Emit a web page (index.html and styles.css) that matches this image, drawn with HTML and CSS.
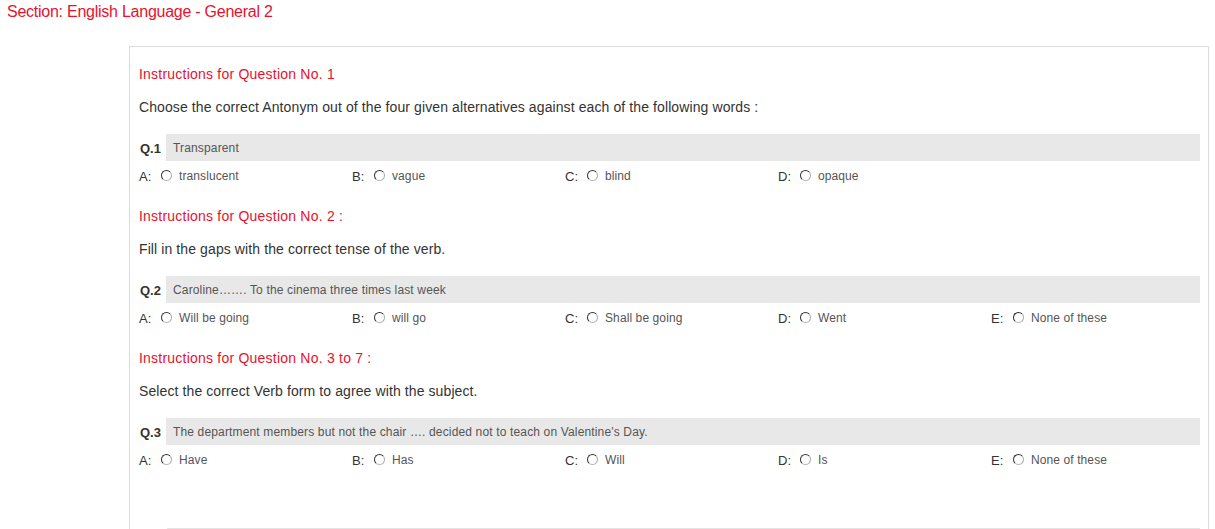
FILE: index.html
```html
<!DOCTYPE html>
<html>
<head>
<meta charset="utf-8">
<link rel="stylesheet" href="styles.css">
</head>
<body>
<div class="section-title">Section: English Language - General 2</div>
<div class="paper">
  <div class="block">
    <div class="instr">Instructions for Question No. 1</div>
    <div class="desc">Choose the correct Antonym out of the four given alternatives against each of the following words :</div>
    <div class="qrow"><span class="qno">Q.1</span><span class="qtext">Transparent</span></div>
    <div class="opts">
      <div class="opt"><span class="lbl">A:</span><span class="radio"></span><span class="otext">translucent</span></div>
      <div class="opt"><span class="lbl">B:</span><span class="radio"></span><span class="otext">vague</span></div>
      <div class="opt"><span class="lbl">C:</span><span class="radio"></span><span class="otext">blind</span></div>
      <div class="opt"><span class="lbl">D:</span><span class="radio"></span><span class="otext">opaque</span></div>
    </div>
  </div>
  <div class="block">
    <div class="instr">Instructions for Question No. 2 :</div>
    <div class="desc">Fill in the gaps with the correct tense of the verb.</div>
    <div class="qrow"><span class="qno">Q.2</span><span class="qtext">Caroline……. To the cinema three times last week</span></div>
    <div class="opts">
      <div class="opt"><span class="lbl">A:</span><span class="radio"></span><span class="otext">Will be going</span></div>
      <div class="opt"><span class="lbl">B:</span><span class="radio"></span><span class="otext">will go</span></div>
      <div class="opt"><span class="lbl">C:</span><span class="radio"></span><span class="otext">Shall be going</span></div>
      <div class="opt"><span class="lbl">D:</span><span class="radio"></span><span class="otext">Went</span></div>
      <div class="opt"><span class="lbl">E:</span><span class="radio"></span><span class="otext">None of these</span></div>
    </div>
  </div>
  <div class="block">
    <div class="instr">Instructions for Question No. 3 to 7 :</div>
    <div class="desc">Select the correct Verb form to agree with the subject.</div>
    <div class="qrow"><span class="qno">Q.3</span><span class="qtext">The department members but not the chair …. decided not to teach on Valentine's Day.</span></div>
    <div class="opts">
      <div class="opt"><span class="lbl">A:</span><span class="radio"></span><span class="otext">Have</span></div>
      <div class="opt"><span class="lbl">B:</span><span class="radio"></span><span class="otext">Has</span></div>
      <div class="opt"><span class="lbl">C:</span><span class="radio"></span><span class="otext">Will</span></div>
      <div class="opt"><span class="lbl">D:</span><span class="radio"></span><span class="otext">Is</span></div>
      <div class="opt"><span class="lbl">E:</span><span class="radio"></span><span class="otext">None of these</span></div>
    </div>
  </div>
  <div class="next"></div>
</div>
</body>
</html>
```
FILE: styles.css
```css
html, body {
  margin: 0;
  padding: 0;
  background: #fff;
  font-family: "Liberation Sans", Arial, sans-serif;
}
.section-title {
  padding: 3px 0 0 7px;
  font-size: 16px;
  line-height: 18px;
  letter-spacing: -0.25px;
  color: #e8112d;
}
.paper {
  margin: 25px 6px 0 129px;
  border: 1px solid #dcdcdc;
  padding: 17px 8px 0 9px;
  height: 600px;
}
.block {
  margin-bottom: 20px;
}
.instr {
  font-size: 14px;
  line-height: 20px;
  letter-spacing: 0.22px;
  color: #e8112d;
}
.desc {
  margin-top: 13px;
  font-size: 14px;
  line-height: 20px;
  letter-spacing: 0.1px;
  color: #333;
}
.qrow {
  margin-top: 17px;
  display: flex;
  height: 27px;
  align-items: stretch;
}
.qno {
  width: 27px;
  font-size: 13px;
  font-weight: bold;
  color: #333;
  line-height: 29px;
  padding-left: 1px;
  box-sizing: border-box;
}
.qtext {
  flex: 1;
  background: #e8e8e8;
  font-size: 12px;
  color: #555;
  line-height: 29px;
  padding-left: 7px;
  letter-spacing: 0.15px;
}
.opts {
  margin-top: 5px;
  display: grid;
  grid-template-columns: repeat(5, 213px);
  height: 20px;
}
.opt {
  display: flex;
  align-items: center;
  height: 20px;
}
.lbl {
  width: 22px;
  font-size: 13px;
  color: #333;
}
.radio {
  width: 9px;
  height: 9px;
  border-radius: 50%;
  border: 1px solid #555;
  border-left-color: #333;
  border-top-color: #333;
  border-right-color: #aaa;
  border-bottom-color: #bbb;
  background: #fff;
  margin-right: 7px;
  margin-top: -1px;
}
.otext {
  font-size: 12px;
  color: #555;
  letter-spacing: 0.1px;
}
.next {
  margin: 58px 0 0 28px;
  border-top: 1px solid #e4e4e4;
}
```
